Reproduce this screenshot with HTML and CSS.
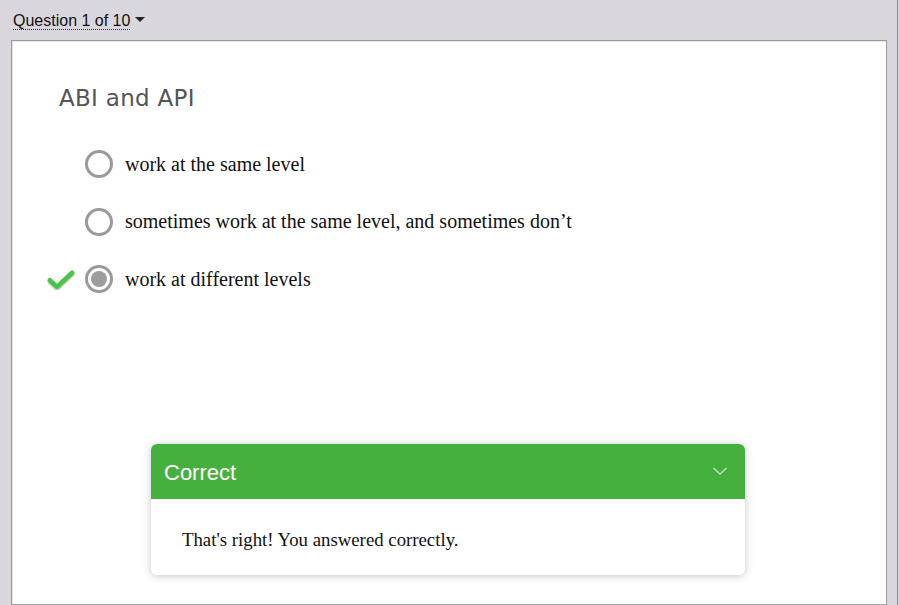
FILE: index.html
```html
<!DOCTYPE html>
<html>
<head>
<meta charset="utf-8">
<link rel="stylesheet" href="styles.css">
</head>
<body>
<div class="frame">
  <div class="topbar">
    <span class="qnav">Question 1 of 10</span>
    <span class="caret"></span>
  </div>
  <div class="panel">
    <h1 class="title">ABI and API</h1>
    <div class="options">
      <div class="option">
        <span class="mark"></span>
        <span class="radio"></span>
        <span class="label">work at the same level</span>
      </div>
      <div class="option">
        <span class="mark"></span>
        <span class="radio"></span>
        <span class="label">sometimes work at the same level, and sometimes don’t</span>
      </div>
      <div class="option">
        <span class="mark">
          <svg width="28" height="22" viewBox="0 0 28 22">
            <path d="M3 12.5 L10 19 L25 5" fill="none" stroke="#d9d9d9" stroke-width="4.5" stroke-linecap="round" stroke-linejoin="round" transform="translate(0 2)"/>
            <path d="M3 12.5 L10 19 L25 5" fill="none" stroke="#4cc44a" stroke-width="5" stroke-linecap="round" stroke-linejoin="round"/>
          </svg>
        </span>
        <span class="radio checked"></span>
        <span class="label">work at different levels</span>
      </div>
    </div>
    <div class="feedback">
      <div class="fb-head">
        <span class="fb-title">Correct</span>
        <svg class="chev" width="16" height="10" viewBox="0 0 16 10">
          <path d="M1.5 2 L8 8 L14.5 2" fill="none" stroke="#b9e2b6" stroke-width="1.4"/>
        </svg>
      </div>
      <div class="fb-body">That's right! You answered correctly.</div>
    </div>
  </div>
</div>
</body>
</html>
```
FILE: styles.css
```css
html, body {
  margin: 0;
  padding: 0;
  height: 605px;
  overflow: hidden;
  background: #d9d7dd;
}
.frame {
  width: 897px;
  height: 605px;
  border-right: 1px solid #8f8d92;
  display: flex;
  flex-direction: column;
}
.topbar {
  height: 40px;
  display: flex;
  align-items: center;
  padding-left: 13px;
  padding-top: 2px;
  box-sizing: border-box;
  font-family: "Liberation Sans", Arial, sans-serif;
  font-size: 16px;
  color: #111;
}
.qnav {
  border-bottom: 1px dotted #333;
  line-height: 17px;
}
.caret {
  width: 0;
  height: 0;
  border-left: 5px solid transparent;
  border-right: 5px solid transparent;
  border-top: 5px solid #222;
  margin-left: 5px;
  margin-top: -3px;
}
.panel {
  margin-left: 11px;
  width: 874px;
  flex: 1;
  background: #fff;
  border: 1px solid #9c9a9f;
  border-bottom-color: #a8a8a8;
  box-shadow: inset 1px 1px 0 #e6e6e6;
  display: flex;
  flex-direction: column;
}
.title {
  margin: 44px 0 0 47px;
  font-family: "DejaVu Sans", Verdana, sans-serif;
  font-weight: normal;
  font-size: 23px;
  line-height: 26px;
  color: #555;
  letter-spacing: 0.3px;
}
.options {
  margin-top: 38.5px;
  display: flex;
  flex-direction: column;
  gap: 28.5px;
}
.option {
  display: flex;
  align-items: center;
  height: 29px;
  padding-left: 35px;
}
.mark {
  width: 28px;
  height: 22px;
  margin-right: 10px;
  display: flex;
}
.radio {
  width: 22px;
  height: 22px;
  border: 3px solid #9a9a9a;
  border-radius: 50%;
  background: #fff;
  position: relative;
  flex: none;
}
.radio.checked::after {
  content: "";
  position: absolute;
  left: 3px;
  top: 3px;
  width: 16px;
  height: 16px;
  border-radius: 50%;
  background: #9d9d9d;
}
.label {
  margin-left: 12px;
  font-family: "Liberation Serif", "Times New Roman", serif;
  font-size: 20px;
  color: #111;
}
.feedback {
  margin: 150.5px 0 0 139px;
  width: 594px;
  border-radius: 6px;
  background: #fff;
  box-shadow: 0 1px 8px rgba(0,0,0,0.22);
  overflow: hidden;
}
.fb-head {
  height: 55px;
  background: #46b03f;
  display: flex;
  align-items: center;
  justify-content: space-between;
  padding: 0 17px 0 13px;
}
.fb-title {
  font-family: "Liberation Sans", Arial, sans-serif;
  font-size: 22px;
  color: #fff;
  margin-top: 2px;
}
.chev {
  margin-top: -2px;
}
.fb-body {
  height: 76px;
  box-sizing: border-box;
  padding-top: 6px;
  display: flex;
  align-items: center;
  padding-left: 31px;
  font-family: "Liberation Serif", "Times New Roman", serif;
  font-size: 18.8px;
  color: #111;
}
```
